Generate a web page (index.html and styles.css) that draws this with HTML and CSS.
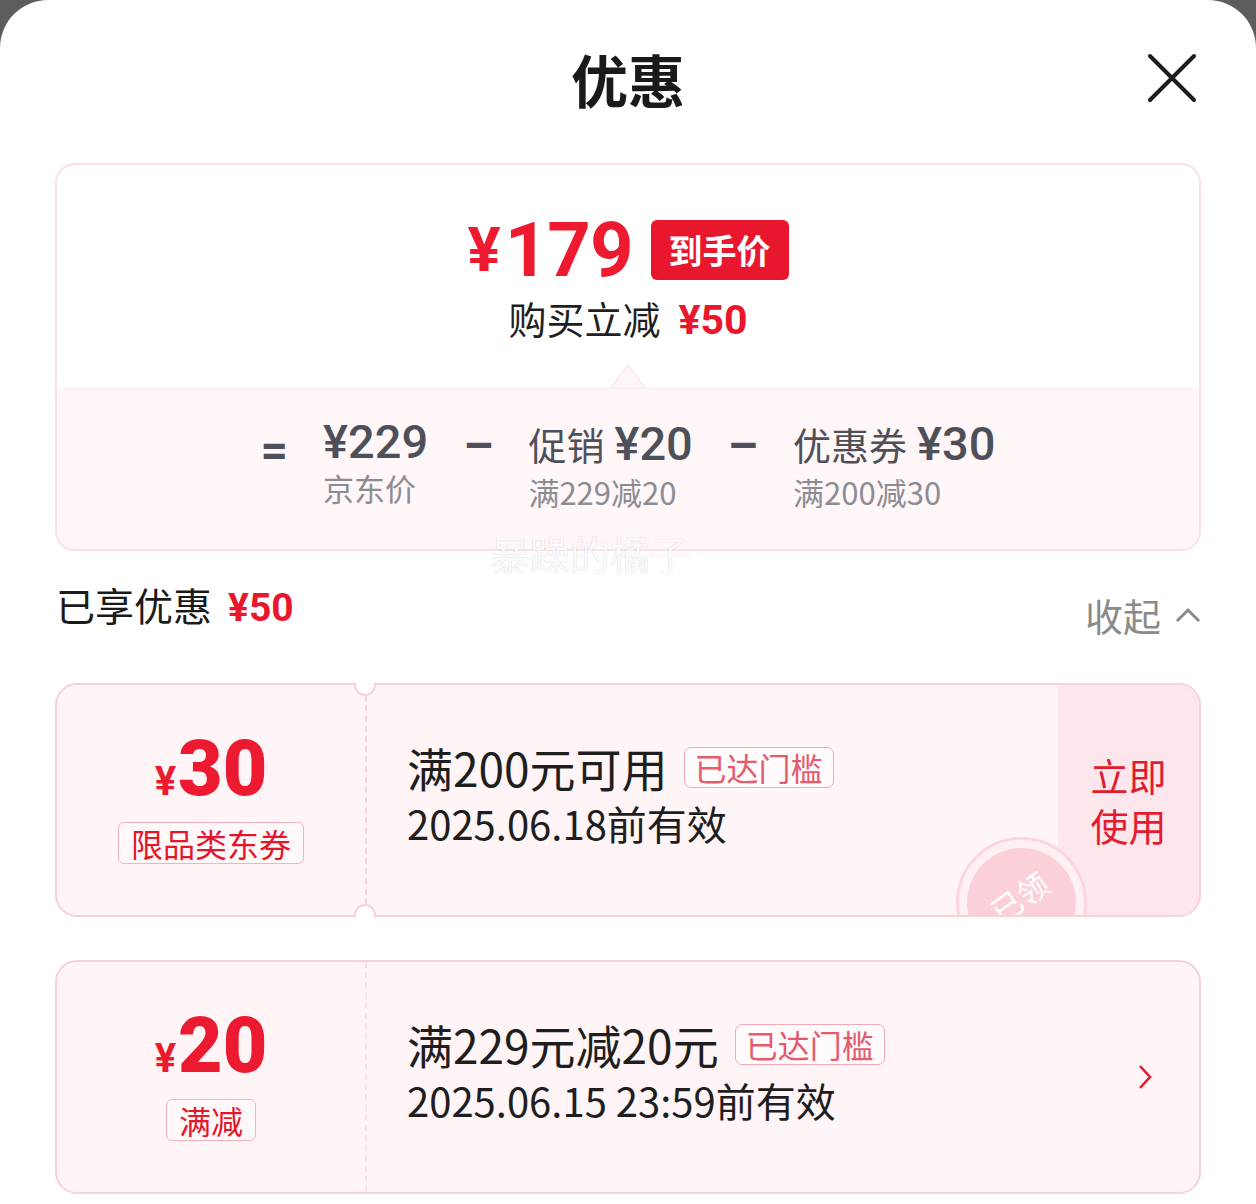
FILE: index.html
```html
<!DOCTYPE html>
<html lang="zh-CN">
<head>
    <meta charset="UTF-8">
    <meta name="viewport" content="width=device-width, initial-scale=1.0">
    <title>优惠</title>
    <link rel="stylesheet" href="styles.css">
</head>
<body>
    <div class="sheet">
        <header class="sheet-head">
            <span></span>
            <h1>优惠</h1>
            <button class="close" aria-label="关闭">
                <svg width="50" height="50" viewBox="0 0 50 50">
                    <path d="M3 3 L47 47 M47 3 L3 47" stroke="#1c1c1c" stroke-width="4" stroke-linecap="round" fill="none"/>
                </svg>
            </button>
        </header>

        <section class="price-box">
            <div class="price-top">
                <div class="price-line">
                    <span class="price-yen">¥</span><span class="price-num">179</span>
                    <span class="price-tag">到手价</span>
                </div>
                <div class="price-sub">购买立减<span class="red-num">¥50</span></div>
            </div>
            <div class="price-calc">
                <span class="op op-eq">=</span>
                <div class="calc-col">
                    <div class="calc-main">¥229</div>
                    <div class="calc-note">京东价</div>
                </div>
                <span class="op">–</span>
                <div class="calc-col calc-col-label">
                    <div class="calc-main"><span class="calc-cn">促销</span>¥20</div>
                    <div class="calc-note">满229减20</div>
                </div>
                <span class="op">–</span>
                <div class="calc-col calc-col-label">
                    <div class="calc-main"><span class="calc-cn">优惠券</span>¥30</div>
                    <div class="calc-note">满200减30</div>
                </div>
            </div>
            <div class="watermark">暴躁的橘子</div>
        </section>

        <div class="enjoyed">
            <div class="enjoyed-title">已享优惠<span class="red-num">¥50</span></div>
            <div class="fold">
                收起
                <svg width="26" height="16" viewBox="0 0 26 16">
                    <path d="M2 14 L13 3 L24 14" stroke="#8a8a8a" stroke-width="3" fill="none"/>
                </svg>
            </div>
        </div>

        <div class="coupon">
            <div class="coupon-left">
                <div class="amount"><span class="amount-yen">¥</span><span class="amount-num">30</span></div>
                <div class="coupon-label">限品类东券</div>
            </div>
            <div class="coupon-main notched">
                <div class="coupon-title">满200元可用<span class="reach-tag">已达门槛</span></div>
                <div class="coupon-date">2025.06.18前有效</div>
            </div>
            <div class="coupon-action">立即<br>使用</div>
            <div class="stamp"><div class="stamp-inner"><span>已领</span></div></div>
        </div>

        <div class="coupon coupon-plain">
            <div class="coupon-left">
                <div class="amount"><span class="amount-yen">¥</span><span class="amount-num">20</span></div>
                <div class="coupon-label">满减</div>
            </div>
            <div class="coupon-main">
                <div class="coupon-title">满229元减20元<span class="reach-tag">已达门槛</span></div>
                <div class="coupon-date">2025.06.15 23:59前有效</div>
            </div>
            <div class="coupon-arrow">
                <svg width="16" height="26" viewBox="0 0 16 26">
                    <path d="M3 2 L13 13 L3 24" stroke="#e31b30" stroke-width="2.6" fill="none"/>
                </svg>
            </div>
        </div>
    </div>
</body>
</html>
```

FILE: styles.css
```css
body {
    margin: 0;
    background-color: #5d5d5d;
    font-family: "Noto Sans CJK SC", "Noto Sans", sans-serif;
    overflow: hidden;
}

.sheet {
    background-color: #fff;
    border-radius: 48px 48px 0 0;
    height: 1204px;
    box-sizing: border-box;
    padding: 0 55px;
}

.sheet-head {
    height: 163px;
    box-sizing: border-box;
    padding-bottom: 7px;
    display: grid;
    grid-template-columns: 1fr auto 1fr;
    align-items: center;
}

h1 {
    margin: 0;
    font-size: 57px;
    font-weight: 700;
    line-height: 1;
    color: #1a1a1a;
}

.close {
    justify-self: end;
    margin-right: 4px;
    width: 50px;
    height: 50px;
    padding: 0;
    border: 0;
    background: none;
}

/* price summary */
.price-box {
    position: relative;
    border: 2px solid #fae1e7;
    border-radius: 20px;
}

.price-top {
    position: relative;
    height: 223px;
    box-sizing: border-box;
    padding-top: 49px;
    display: flex;
    flex-direction: column;
    align-items: center;
    border-radius: 18px 18px 0 0;
}

.price-top::before,
.price-top::after {
    content: "";
    position: absolute;
    bottom: 0;
    left: 50%;
    clip-path: polygon(50% 0, 100% 100%, 0 100%);
}

.price-top::before {
    width: 36px;
    height: 24px;
    margin-left: -18px;
    background-color: #fbe4ea;
}

.price-top::after {
    width: 32px;
    height: 22px;
    margin-left: -16px;
    background-color: #fff6f8;
}

.price-line {
    display: flex;
    align-items: center;
    height: 72px;
    color: #ee1a30;
    font-family: Roboto, sans-serif;
    font-weight: 700;
}

.price-yen {
    font-size: 62px;
    line-height: 72px;
    margin-right: 4px;
}

.price-num {
    font-size: 76px;
    line-height: 72px;
    letter-spacing: -1px;
}

.price-tag {
    margin-left: 18px;
    height: 60px;
    padding: 0 18px;
    background-color: #e8172d;
    border-radius: 6px;
    color: #fff;
    font-family: "Noto Sans CJK SC", sans-serif;
    font-size: 34px;
    line-height: 60px;
}

.price-sub {
    margin-top: 7px;
    font-size: 38px;
    line-height: 50px;
    color: #1f1f1f;
}

.red-num {
    margin-left: 18px;
    color: #e8172d;
    font-family: Roboto, sans-serif;
    font-weight: 700;
    font-size: 41px;
}

.price-calc {
    height: 161px;
    box-sizing: border-box;
    padding-top: 27px;
    display: flex;
    justify-content: center;
    align-items: flex-start;
    gap: 35px;
    background-color: #fff6f8;
    border-top: 1px solid #fcebef;
    border-radius: 0 0 18px 18px;
}

.op {
    font-family: Roboto, sans-serif;
    font-weight: 700;
    font-size: 48px;
    line-height: 52px;
    color: #4e5059;
    margin-top: 4px;
}

.op-eq {
    margin-top: 9px;
}

.calc-main {
    font-family: Roboto, "Noto Sans CJK SC", sans-serif;
    font-weight: 500;
    font-size: 47px;
    line-height: 52px;
    color: #4e5059;
}

.calc-cn {
    font-family: "Noto Sans CJK SC", sans-serif;
    font-weight: 400;
    font-size: 38px;
    margin-right: 10px;
}

.calc-col-label .calc-main {
    line-height: 56px;
}

.calc-note {
    font-size: 31px;
    line-height: 40px;
    color: #8c8d93;
}

.watermark {
    position: absolute;
    left: 433px;
    top: 366px;
    font-size: 40px;
    line-height: 44px;
    color: rgba(255, 255, 255, 0.92);
    text-shadow: 0 0 1px rgba(0, 0, 0, 0.22);
}

/* enjoyed row */
.enjoyed {
    height: 132px;
    box-sizing: border-box;
    padding-top: 25px;
    display: flex;
    justify-content: space-between;
    align-items: flex-start;
}

.enjoyed-title {
    margin-left: 1px;
    font-size: 39px;
    line-height: 56px;
    color: #1a1a1a;
}

.enjoyed-title .red-num {
    font-size: 39px;
    margin-left: 16px;
}

.fold {
    margin-top: 11px;
    display: flex;
    align-items: center;
    gap: 14px;
    font-size: 38px;
    line-height: 56px;
    color: #8a8a8a;
}

/* coupons */
.coupon {
    position: relative;
    display: grid;
    grid-template-columns: 308px 1fr 141px;
    height: 234px;
    box-sizing: border-box;
    border: 2px solid #f6d2d9;
    border-radius: 22px;
    background-color: #fff4f6;
}

.coupon + .coupon {
    margin-top: 43px;
}

.coupon-plain {
    grid-template-columns: 308px 1fr auto;
}

.coupon-left {
    display: flex;
    flex-direction: column;
    align-items: center;
    justify-content: center;
}

.amount {
    display: flex;
    align-items: baseline;
    color: #ec1a30;
    font-family: Roboto, sans-serif;
    font-weight: 900;
    line-height: 66px;
}

.amount-yen {
    font-size: 40px;
    font-weight: 700;
    margin-right: 2px;
}

.amount-num {
    font-size: 77px;
}

.coupon-label {
    margin-top: 7px;
    padding: 0 12px;
    border: 1px solid #f2b3bf;
    border-radius: 6px;
    background-color: #fff8f9;
    font-size: 32px;
    line-height: 40px;
    color: #e3162c;
}

.coupon-main {
    position: relative;
    display: flex;
    flex-direction: column;
    justify-content: center;
    padding-left: 40px;
    padding-bottom: 10px;
    border-left: 2px dashed #f5d3da;
}

.coupon-plain .coupon-main {
    border-left-color: #f8e0e5;
}

.notched::before,
.notched::after {
    content: "";
    position: absolute;
    left: -13px;
    width: 22px;
    height: 13px;
    box-sizing: border-box;
    background-color: #fff;
    border: 2px solid #f6d2d9;
}

.notched::before {
    top: -2px;
    border-top: 0;
    border-radius: 0 0 11px 11px;
}

.notched::after {
    bottom: -2px;
    border-bottom: 0;
    border-radius: 11px 11px 0 0;
}

.coupon-title {
    display: flex;
    align-items: center;
    font-size: 46px;
    line-height: 56px;
    color: #1e1e1e;
}

.reach-tag {
    margin-left: 16px;
    padding: 0 10px;
    border: 1.5px solid #f1a9b6;
    border-radius: 7px;
    background-color: #fffafb;
    font-size: 32px;
    line-height: 39px;
    color: #e45b6b;
}

.coupon-date {
    font-size: 40px;
    line-height: 56px;
    color: #1e1e1e;
}

.coupon-action {
    display: flex;
    align-items: center;
    justify-content: center;
    text-align: center;
    background-color: #fde7ed;
    border-radius: 0 20px 20px 0;
    font-size: 38px;
    line-height: 50px;
    color: #e31b30;
}

.coupon-arrow {
    display: flex;
    align-items: center;
    padding-right: 46px;
}

.stamp {
    position: absolute;
    left: 899px;
    top: 152px;
    width: 131px;
    height: 131px;
    box-sizing: border-box;
    padding: 8px;
    border: 3px solid #fcd6dd;
    border-radius: 50%;
    background-color: #fff0f3;
    clip-path: inset(0 0 53px 0);
}

.stamp-inner {
    width: 100%;
    height: 100%;
    border-radius: 50%;
    background-color: #fbd0d8;
    display: flex;
    align-items: center;
    justify-content: center;
}

.stamp-inner span {
    color: #fff;
    font-size: 31px;
    transform: translate(-3px, -6px) rotate(-35deg);
}
```
